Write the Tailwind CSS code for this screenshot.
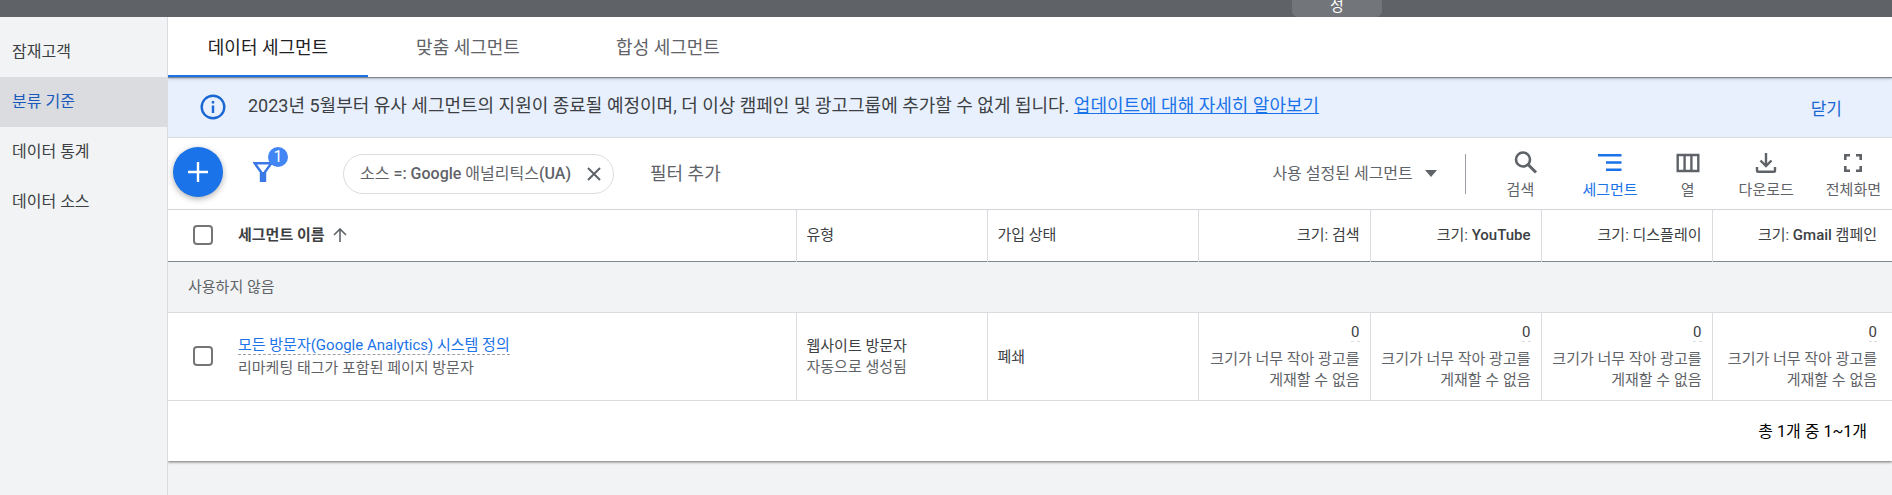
<!DOCTYPE html>
<html lang="ko">
  <head>
    <meta charset="UTF-8" />
    <meta name="viewport" content="width=device-width, initial-scale=1.0" />
    <script src="https://cdn.jsdelivr.net/npm/@tailwindcss/browser@4"></script>
    <title>잠재고객 관리자</title>
  </head>
  <body class="min-h-screen flex flex-col bg-[#f1f3f4] text-[#3c4043] text-[15px] leading-[21px] font-[Roboto,'Noto_Sans_CJK_KR',sans-serif]">
    <!-- Top bar -->
    <header class="h-[17px] shrink-0 bg-[#5f6368] overflow-hidden flex flex-col justify-end">
      <div class="ml-[1292px] w-[90px] h-10 shrink-0 rounded-md bg-[#72767a] text-white flex items-end justify-center">성</div>
    </header>

    <div class="flex flex-1">
      <!-- Sidebar -->
      <nav class="relative z-20 w-[168px] shrink-0 bg-[#f1f3f4] border-r border-[#dadce0] pt-2.5 text-base">
        <a href="#" class="h-[50px] flex items-center pl-3">잠재고객</a>
        <a href="#" class="h-[50px] flex items-center pl-3 bg-[#dadce0] text-[#185abc]">분류 기준</a>
        <a href="#" class="h-[50px] flex items-center pl-3">데이터 통계</a>
        <a href="#" class="h-[50px] flex items-center pl-3">데이터 소스</a>
      </nav>

      <main class="flex-1 min-w-0">
        <!-- Tabs -->
        <div class="relative z-10 h-[60px] flex bg-white text-lg text-[#5f6368] shadow-[0_1px_1px_#80868b,0_2px_3px_#80868b66]">
          <button class="w-[200px] pt-1 text-[#202124] border-b-2 border-[#1a73e8]">데이터 세그먼트</button>
          <button class="w-[200px] pt-1 border-b-2 border-transparent">맞춤 세그먼트</button>
          <button class="w-[200px] pt-1 border-b-2 border-transparent">합성 세그먼트</button>
        </div>

        <!-- Notice -->
        <div class="h-[61px] flex items-center bg-[#e8f0fe] border-b border-[#dadce0] pl-8 pr-[50px]">
          <svg class="w-[26px] h-[26px] shrink-0" viewBox="0 0 26 26" fill="none" stroke="#1967d2" stroke-width="2.4">
            <circle cx="13" cy="13" r="11.3" />
            <path d="M13 11.5v7.5M13 7v2.6" />
          </svg>
          <p class="pl-[22px] pb-0.5 text-lg">
            2023년 5월부터 유사 세그먼트의 지원이 종료될 예정이며, 더 이상 캠페인 및 광고그룹에 추가할 수 없게 됩니다.
            <a href="#" class="text-[#1a73e8] underline">업데이트에 대해 자세히 알아보기</a>
          </p>
          <button class="ml-auto pt-1 text-[17px] text-[#1967d2]">닫기</button>
        </div>

        <!-- Toolbar -->
        <div class="h-[72px] flex items-center bg-white border-b border-[#dadce0] pl-[5px] pr-[11px] text-[#5f6368]">
          <button aria-label="추가" class="w-[50px] h-[50px] rounded-full bg-[#1a73e8] shadow-[0_2px_6px_#00000050] flex items-center justify-center -mt-1">
            <svg class="w-5 h-5" viewBox="0 0 20 20" stroke="#fff" stroke-width="2.4"><path d="M10 0v20M0 10h20" /></svg>
          </button>
          <button aria-label="필터" class="relative ml-[30px] w-5 h-5 -mt-1">
            <svg class="w-5 h-5" viewBox="0 0 20 20" fill="none" stroke="#3b78e7" stroke-width="2.4">
              <path d="M1.6 1.2h16.8L12 10v9H8v-9z" />
              <path d="M10 10v10" stroke-width="4" />
            </svg>
            <span class="absolute left-[15px] -top-[15px] w-5 h-5 rounded-full bg-[#4285f4] text-white text-base leading-5">1</span>
          </button>
          <div class="ml-[70px] h-10 flex items-center rounded-full border border-[#dadce0] pl-4 pr-3 text-base">
            <span>소스 <span class="font-medium">=: Google</span> 애널리틱스<span class="font-medium">(UA)</span></span>
            <button aria-label="삭제" class="ml-4">
              <svg class="w-3.5 h-3.5" viewBox="0 0 14 14" stroke="#5f6368" stroke-width="2"><path d="M1 1l12 12M13 1L1 13" /></svg>
            </button>
          </div>
          <button class="ml-9 text-lg">필터 추가</button>

          <div class="ml-auto relative flex items-center">
            <select aria-label="세그먼트 상태" class="appearance-none text-base pr-7">
              <option>사용 설정된 세그먼트</option>
            </select>
            <svg class="absolute right-1 w-3 h-[7px] pointer-events-none" viewBox="0 0 12 7" fill="#5f6368"><path d="M0 0h12L6 7z" /></svg>
          </div>
          <div class="ml-6 mr-9 w-px h-10 bg-[#9aa0a6]"></div>
          <div class="flex gap-10 pt-1">
            <button class="flex flex-col items-center gap-[5px]">
              <svg class="w-6 h-6 ml-3" viewBox="0 0 24 24" fill="none" stroke="#5f6368" stroke-width="2.6">
                <circle cx="9" cy="8.5" r="7" /><path d="M14 13.5l8 8" stroke-width="3" />
              </svg>
              검색
            </button>
            <button class="flex flex-col items-center gap-[5px] ml-1 text-[#1a73e8]">
              <svg class="w-6 h-6" viewBox="0 0 24 24" stroke="#1a73e8" stroke-width="2.6"><path d="M0 4.2h23.5M8 11.5h15.5M8 18.8h15.5" /></svg>
              세그먼트
            </button>
            <button class="flex flex-col items-center gap-[5px] -ml-0.5">
              <svg class="w-6 h-6" viewBox="0 0 24 24" fill="none" stroke="#5f6368" stroke-width="2.4"><path d="M1.7 4h20.6v16H1.7zM8.6 4v16M15.4 4v16" /></svg>
              열
            </button>
            <button class="flex flex-col items-center gap-[5px] -ml-px">
              <svg class="w-6 h-6" viewBox="0 0 24 24" fill="none" stroke="#5f6368" stroke-width="2.4"><path d="M12 2v13M6.5 9.5l5.5 5.5 5.5-5.5M3 16v3.5a1.3 1.3 0 001.3 1.3h15.4a1.3 1.3 0 001.3-1.3V16" /></svg>
              다운로드
            </button>
            <button class="flex flex-col items-center gap-[5px] -ml-2">
              <svg class="w-6 h-6" viewBox="0 0 24 24" fill="none" stroke="#5f6368" stroke-width="2.6"><path d="M4.3 9V4.3H9M15 4.3h4.7V9M19.7 15v4.7H15M9 19.7H4.3V15" /></svg>
              전체화면
            </button>
          </div>
        </div>

        <!-- Segments table -->
        <div class="bg-white shadow-[0_1px_2px_#00000066,0_2px_3px_#00000022]">
          <table class="w-full table-fixed border-collapse text-left">
            <colgroup>
              <col class="w-[70px]" />
              <col />
              <col class="w-[191px]" />
              <col class="w-[211px]" />
              <col class="w-[172px]" />
              <col class="w-[171px]" />
              <col class="w-[171px]" />
              <col class="w-[180px]" />
            </colgroup>
            <thead>
              <tr class="h-[51px] border-b border-[#80868b]">
                <th class="pl-[25px]">
                  <input type="checkbox" aria-label="모두 선택" class="block appearance-none w-5 h-5 border-2 border-[#757575] rounded-sm" />
                </th>
                <th class="font-bold">
                  <span class="flex items-center gap-2">
                    세그먼트 이름
                    <svg class="w-3.5 h-3.5" viewBox="0 0 14 14" fill="none" stroke="#5f6368" stroke-width="1.6"><path d="M7 14V1.2M1 7l6-6 6 6" /></svg>
                  </span>
                </th>
                <th class="border-l border-[#dadce0] pl-2.5 font-normal">유형</th>
                <th class="border-l border-[#dadce0] pl-2.5 font-normal">가입 상태</th>
                <th class="border-l border-[#dadce0] pr-2.5 text-right font-normal">크기: 검색</th>
                <th class="border-l border-[#dadce0] pr-2.5 text-right font-normal">크기: <span class="font-medium">YouTube</span></th>
                <th class="border-l border-[#dadce0] pr-2.5 text-right font-normal">크기: 디스플레이</th>
                <th class="border-l border-[#dadce0] pr-[15px] text-right font-normal">크기: <span class="font-medium">Gmail</span> 캠페인</th>
              </tr>
            </thead>
            <tbody>
              <tr class="h-[51px] bg-[#f1f3f4] border-b border-[#dadce0] text-[#5f6368]">
                <td colspan="8" class="pl-5 pt-0.5">사용하지 않음</td>
              </tr>
              <tr class="h-[88px] border-b border-[#dadce0]">
                <td class="pl-[25px]">
                  <input type="checkbox" aria-label="모든 방문자 선택" class="block appearance-none w-5 h-5 border-2 border-[#757575] rounded-sm" />
                </td>
                <td class="pt-0.5">
                  <a href="#" class="text-[#1a73e8] border-b border-dashed border-[#9aa0a6]">모든 방문자(Google Analytics) 시스템 정의</a>
                  <div class="mt-0.5 text-[#5f6368]">리마케팅 태그가 포함된 페이지 방문자</div>
                </td>
                <td class="border-l border-[#dadce0] pl-2.5 pt-0.5">
                  웹사이트 방문자
                  <div class="text-[#5f6368]">자동으로 생성됨</div>
                </td>
                <td class="border-l border-[#dadce0] pl-2.5 pt-0.5">폐쇄</td>
                <td class="border-l border-[#dadce0] pr-2.5 text-right">
                  <span class="border-b border-dashed border-[#dadce0]">0</span>
                  <div class="mt-1.5 text-[#5f6368]">크기가 너무 작아 광고를<br />게재할 수 없음</div>
                </td>
                <td class="border-l border-[#dadce0] pr-2.5 text-right">
                  <span class="border-b border-dashed border-[#dadce0]">0</span>
                  <div class="mt-1.5 text-[#5f6368]">크기가 너무 작아 광고를<br />게재할 수 없음</div>
                </td>
                <td class="border-l border-[#dadce0] pr-2.5 text-right">
                  <span class="border-b border-dashed border-[#dadce0]">0</span>
                  <div class="mt-1.5 text-[#5f6368]">크기가 너무 작아 광고를<br />게재할 수 없음</div>
                </td>
                <td class="border-l border-[#dadce0] pr-[15px] text-right">
                  <span class="border-b border-dashed border-[#dadce0]">0</span>
                  <div class="mt-1.5 text-[#5f6368]">크기가 너무 작아 광고를<br />게재할 수 없음</div>
                </td>
              </tr>
            </tbody>
          </table>
          <div class="h-[60px] flex items-center justify-end pr-[25px] pt-0.5 text-base text-black">총 1개 중 1~1개</div>
        </div>
      </main>
    </div>
  </body>
</html>
